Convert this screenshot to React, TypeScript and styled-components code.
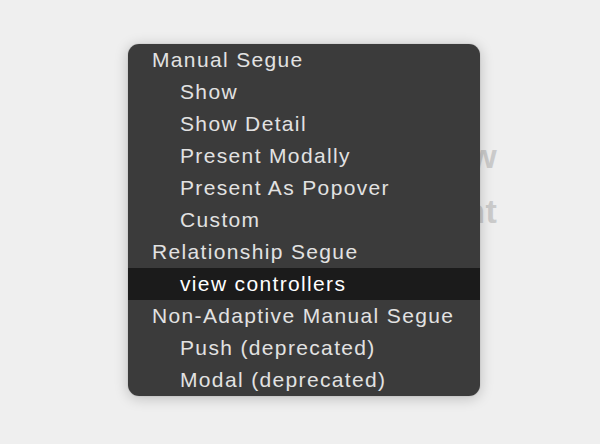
import React from "react";
import styled, { createGlobalStyle } from "styled-components";

type MenuItem = {
  label: string;
  kind: "header" | "item";
  selected?: boolean;
};

const items: MenuItem[] = [
  { label: "Manual Segue", kind: "header" },
  { label: "Show", kind: "item" },
  { label: "Show Detail", kind: "item" },
  { label: "Present Modally", kind: "item" },
  { label: "Present As Popover", kind: "item" },
  { label: "Custom", kind: "item" },
  { label: "Relationship Segue", kind: "header" },
  { label: "view controllers", kind: "item", selected: true },
  { label: "Non-Adaptive Manual Segue", kind: "header" },
  { label: "Push (deprecated)", kind: "item" },
  { label: "Modal (deprecated)", kind: "item" },
];

const App = () => {
  return (
    <>
      <GlobalStyle />
      <Canvas>
        <Placeholder>
          <PlaceholderLine>View</PlaceholderLine>
          <PlaceholderLine>Content</PlaceholderLine>
        </Placeholder>

        <Menu>
          {items.map((item) => (
            <Row key={item.label} $indent={item.kind === "item"} $selected={!!item.selected}>
              {item.label}
            </Row>
          ))}
        </Menu>
      </Canvas>
    </>
  );
};

export default App;

const GlobalStyle = createGlobalStyle`
  html, body {
    margin: 0;
    padding: 0;
    background: #efefef;
  }
  body {
    font-family: "Liberation Sans", Arial, sans-serif;
  }
`;

const Canvas = styled.div`
  position: relative;
  width: 600px;
  height: 444px;
  overflow: hidden;
  background: #efefef;
`;

const Placeholder = styled.div`
  display: flex;
  flex-direction: column;
  align-items: flex-end;
  padding: 136px 103px 0 0;
  gap: 15px;
`;

const PlaceholderLine = styled.div`
  font-size: 34px;
  font-weight: 700;
  color: #cbcbcb;
  line-height: 40px;
  letter-spacing: 0.3px;
`;

const Menu = styled.div`
  position: absolute;
  left: 128px;
  top: 44px;
  width: 352px;
  border-radius: 11px;
  background: rgba(57, 57, 57, 0.99);
  box-shadow: 0 2px 14px rgba(0, 0, 0, 0.22), 0 0 1px rgba(0, 0, 0, 0.35);
  overflow: hidden;
  display: flex;
  flex-direction: column;
`;

const Row = styled.div<{ $indent: boolean; $selected: boolean }>`
  height: 32px;
  display: flex;
  align-items: center;
  padding-left: ${({ $indent }) => ($indent ? "52px" : "24px")};
  font-size: 21px;
  letter-spacing: 1.35px;
  color: ${({ $selected }) => ($selected ? "#ffffff" : "#e2e2e2")};
  background: ${({ $selected }) => ($selected ? "#1b1b1b" : "transparent")};
  white-space: nowrap;
`;
